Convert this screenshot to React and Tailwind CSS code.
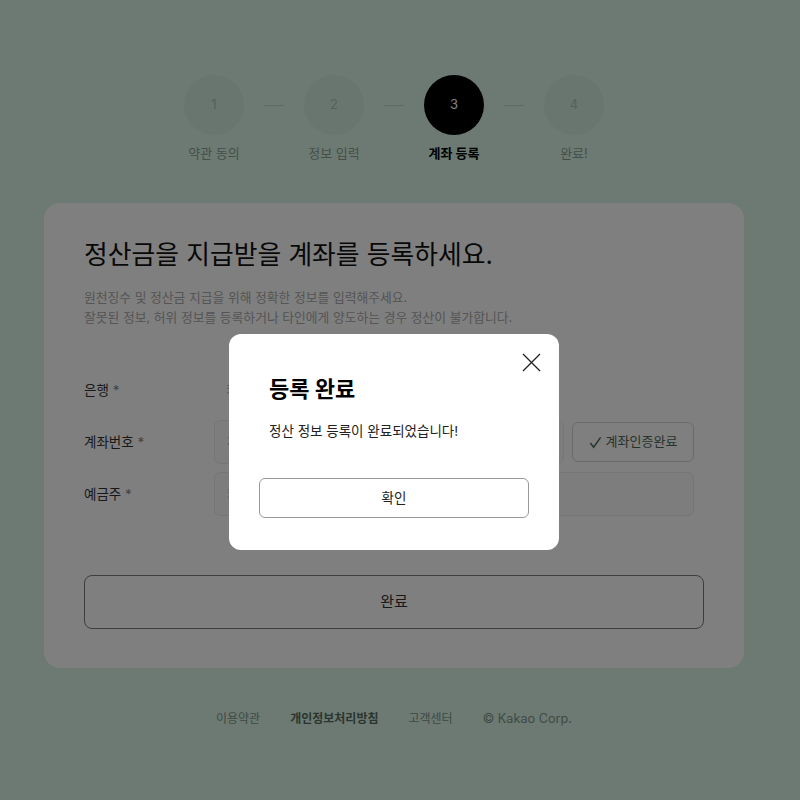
import React from 'react';

const steps = [
    { n: 1, label: '약관 동의' },
    { n: 2, label: '정보 입력' },
    { n: 3, label: '계좌 등록', active: true },
    { n: 4, label: '완료!' },
];

function Stepper() {
    return (
        <div className="flex justify-center pt-[75px]">
            {steps.map((s, i) => (
                <React.Fragment key={s.n}>
                    {i > 0 && <div className="mx-5 mt-[30px] h-px w-5 bg-[#bed6ca]" />}
                    <div className="flex w-[60px] flex-col items-center">
                        <div
                            className={`flex h-[60px] w-[60px] items-center justify-center rounded-full text-[13px] ${
                                s.active ? 'bg-black text-white' : 'bg-[#d3ecdf] text-[#a9c2b6]'
                            }`}
                        >
                            {s.n}
                        </div>
                        <div
                            className={`mt-[8px] whitespace-nowrap text-[13px] leading-5 ${
                                s.active ? 'font-bold text-black' : 'text-[#8a9e94]'
                            }`}
                        >
                            {s.label}
                        </div>
                    </div>
                </React.Fragment>
            ))}
        </div>
    );
}

function Field({ label, children }) {
    return (
        <div className="flex h-11 items-center">
            <div className="w-[130px] shrink-0 text-[13.5px] text-[#333]">
                {label} <span className="text-[#888]">*</span>
            </div>
            <div className="flex flex-1 items-center gap-2">{children}</div>
        </div>
    );
}

function AccountCard() {
    return (
        <div className="mx-auto mt-10 w-[700px] rounded-2xl bg-white px-10 pb-[39px] pt-[35px]">
            <h1 className="text-[25.8px] leading-[34px] text-[#111]">정산금을 지급받을 계좌를 등록하세요.</h1>
            <p className="mt-4 text-[12.8px] leading-5 text-[#aaa]">
                원천징수 및 정산금 지급을 위해 정확한 정보를 입력해주세요.
                <br />
                잘못된 정보, 허위 정보를 등록하거나 타인에게 양도하는 경우 정산이 불가합니다.
            </p>

            <div className="mt-10 flex w-[610px] flex-col gap-2">
                <Field label="은행">
                    <span className="pl-3 text-[13px] text-[#b5b5b5]">카카오뱅크</span>
                </Field>
                <Field label="계좌번호">
                    <div className="flex h-11 flex-1 items-center rounded-md border border-[#ececec] bg-[#fbfbfb] px-3 text-[13px] text-[#b5b5b5]">
                        3333-01-2345678
                    </div>
                    <button className="flex h-10 w-[122px] shrink-0 items-center justify-center gap-1 rounded-md border border-[#d6d6d6] text-[13px] text-[#4f675b]">
                        <svg width="13" height="13" viewBox="0 0 14 14" fill="none" stroke="currentColor" strokeWidth="1.6">
                            <path d="M1.5 7.5 L5 12 L12.5 1.5" />
                        </svg>
                        계좌인증완료
                    </button>
                </Field>
                <Field label="예금주">
                    <div className="flex h-11 flex-1 items-center rounded-md border border-[#ececec] bg-[#fbfbfb] px-3 text-[13px] text-[#b5b5b5]">
                        카카오
                    </div>
                </Field>
            </div>

            <button className="mt-[59px] flex h-[54px] w-full items-center justify-center rounded-lg border border-[#7a7a7a] text-[15px] text-[#333]">
                완료
            </button>
        </div>
    );
}

function Footer() {
    return (
        <div className="flex justify-center gap-[30px] pb-20 pt-[43px] text-[12px] leading-4 text-[#7e948a]">
            <span>이용약관</span>
            <span className="font-bold text-[#566b61]">개인정보처리방침</span>
            <span>고객센터</span>
            <span className="text-[12.7px]">© Kakao Corp.</span>
        </div>
    );
}

function Modal() {
    return (
        <div className="fixed inset-0 bg-black/50">
            <div className="flex w-[788px] justify-center pt-[334px]">
                <div className="relative w-[330px] rounded-xl bg-white px-[30px] pb-8 pt-[41px]">
                    <button className="absolute right-[18px] top-[19px] text-[#222]">
                        <svg width="19" height="19" viewBox="0 0 19 19" fill="none" stroke="currentColor" strokeWidth="1.3">
                            <path d="M1 1 L18 18 M18 1 L1 18" />
                        </svg>
                    </button>
                    <h2 className="px-2.5 text-[22px] font-bold leading-7 text-black">등록 완료</h2>
                    <p className="mt-[18px] px-2.5 text-[13.5px] leading-5 text-[#222]">정산 정보 등록이 완료되었습니다!</p>
                    <button className="mt-[37px] flex h-10 w-full items-center justify-center rounded-md border border-[#999] text-[13.5px] text-[#222]">
                        확인
                    </button>
                </div>
            </div>
        </div>
    );
}

export default function App() {
    return (
        <div className="min-h-[800px] w-full bg-[#d9f5e7]" style={{ fontFamily: 'Inter, "Noto Sans CJK KR", sans-serif' }}>
            <div className="w-[788px]">
                <Stepper />
                <AccountCard />
                <Footer />
            </div>
            <Modal />
        </div>
    );
}
